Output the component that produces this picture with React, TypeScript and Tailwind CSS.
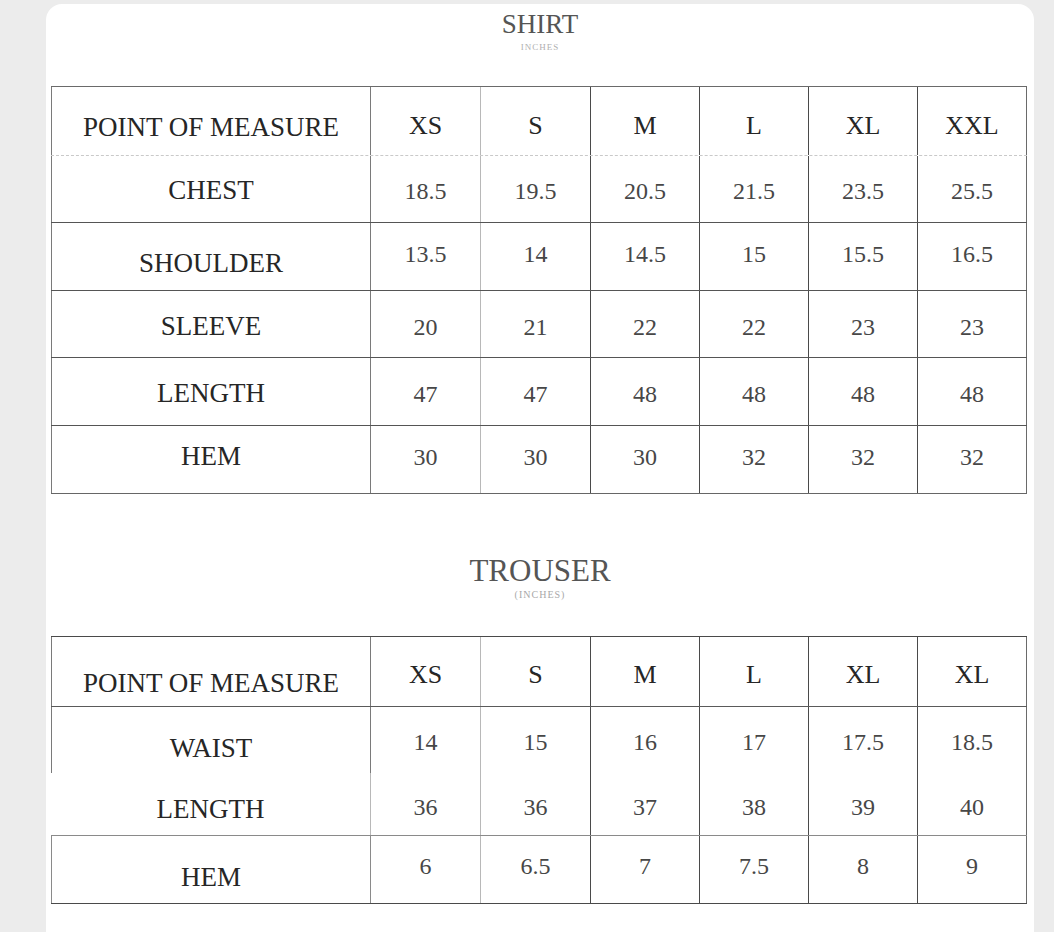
import React from "react";

type Row = {
  label: string;
  values: string[];
  h: string;
  labelCls: string;
  valCls: string;
  rowCls: string;
  labelBorder: string;
};

const COLS = "grid grid-cols-[320px_110px_110px_109px_109px_109px_109px]";

const valBorders = [
  "border-r border-[#b8b8b8]",
  "border-r border-[#4a4a4a]",
  "border-r border-[#4a4a4a]",
  "border-r border-[#4a4a4a]",
  "border-r border-[#4a4a4a]",
  "border-r border-[#6a6a6a]",
];

function Table({ rows, topCls }: { rows: Row[]; topCls: string }) {
  return (
    <div className={`ml-[5px] w-[976px] ${topCls}`}>
      {rows.map((r, i) => (
        <div key={i} className={`${COLS} ${r.h} ${r.rowCls}`}>
          <div
            className={`flex items-center justify-center ${r.labelBorder} ${r.labelCls} text-[27px] text-[#262626]`}
          >
            {r.label}
          </div>
          {r.values.map((v, j) => (
            <div
              key={j}
              className={`flex items-center justify-center ${valBorders[j]} ${r.valCls} ${
                i === 0 ? "text-[26px] text-[#262626]" : "text-[24px] text-[#474747]"
              }`}
            >
              {v}
            </div>
          ))}
        </div>
      ))}
    </div>
  );
}

const shirtRows: Row[] = [
  {
    label: "POINT OF MEASURE",
    values: ["XS", "S", "M", "L", "XL", "XXL"],
    h: "h-[69px]",
    labelCls: "pt-[12px]",
    valCls: "pt-[8px]",
    rowCls: "border-b border-dashed border-[#c9c9c9]",
    labelBorder: "border-l border-r border-[#7a7a7a]",
  },
  {
    label: "CHEST",
    values: ["18.5", "19.5", "20.5", "21.5", "23.5", "25.5"],
    h: "h-[67px]",
    labelCls: "pt-[3px]",
    valCls: "pt-[3px]",
    rowCls: "border-b border-[#555555]",
    labelBorder: "border-l border-r border-[#7a7a7a]",
  },
  {
    label: "SHOULDER",
    values: ["13.5", "14", "14.5", "15", "15.5", "16.5"],
    h: "h-[68px]",
    labelCls: "pt-[14px]",
    valCls: "pb-[6px]",
    rowCls: "border-b border-[#555555]",
    labelBorder: "border-l border-r border-[#7a7a7a]",
  },
  {
    label: "SLEEVE",
    values: ["20", "21", "22", "22", "23", "23"],
    h: "h-[67px]",
    labelCls: "pt-[5px]",
    valCls: "pt-[5px]",
    rowCls: "border-b border-[#555555]",
    labelBorder: "border-l border-r border-[#7a7a7a]",
  },
  {
    label: "LENGTH",
    values: ["47", "47", "48", "48", "48", "48"],
    h: "h-[68px]",
    labelCls: "pt-[4px]",
    valCls: "pt-[4px]",
    rowCls: "border-b border-[#555555]",
    labelBorder: "border-l border-r border-[#7a7a7a]",
  },
  {
    label: "HEM",
    values: ["30", "30", "30", "32", "32", "32"],
    h: "h-[68px]",
    labelCls: "pb-[6px]",
    valCls: "pb-[6px]",
    rowCls: "border-b border-[#666666]",
    labelBorder: "border-l border-r border-[#7a7a7a]",
  },
];

const trouserRows: Row[] = [
  {
    label: "POINT OF MEASURE",
    values: ["XS", "S", "M", "L", "XL", "XL"],
    h: "h-[70px]",
    labelCls: "pt-[24px]",
    valCls: "pt-[6px]",
    rowCls: "border-b border-[#5a5a5a]",
    labelBorder: "border-l border-r border-[#7a7a7a]",
  },
  {
    label: "WAIST",
    values: ["14", "15", "16", "17", "17.5", "18.5"],
    h: "h-[66px]",
    labelCls: "pt-[16px]",
    valCls: "pt-[4px]",
    rowCls: "",
    labelBorder: "border-l border-r border-[#7a7a7a]",
  },
  {
    label: "LENGTH",
    values: ["36", "36", "37", "38", "39", "40"],
    h: "h-[63px]",
    labelCls: "pt-[10px]",
    valCls: "pt-[6px]",
    rowCls: "border-b border-[#8a8a8a]",
    labelBorder: "border-r border-[#b8b8b8]",
  },
  {
    label: "HEM",
    values: ["6", "6.5", "7", "7.5", "8", "9"],
    h: "h-[68px]",
    labelCls: "pt-[16px]",
    valCls: "pb-[8px]",
    rowCls: "border-b border-[#4a4a4a]",
    labelBorder: "border-l border-r border-[#8a8a8a]",
  },
];

export default function App() {
  return (
    <div className="h-[932px] overflow-hidden bg-[#ececec] pt-[4px] pl-[46px] font-['Liberation_Serif','Times_New_Roman',serif]">
      <div className="w-[988px] h-[960px] bg-white rounded-[16px]">
        <div className="flex flex-col items-center pt-[4px]">
          <div className="text-[27px] leading-[32px] text-[#555555]">SHIRT</div>
          <div className="text-[9px] leading-[10px] tracking-[1px] text-[#b0b0b0] mt-[2px]">
            INCHES
          </div>
        </div>
        <Table rows={shirtRows} topCls="mt-[34px] border-t border-[#6a6a6a]" />
        <div className="flex flex-col items-center mt-[59px]">
          <div className="text-[31px] leading-[36px] text-[#555555]">TROUSER</div>
          <div className="text-[10px] leading-[12px] tracking-[1px] text-[#a8a8a8]">
            (INCHES)
          </div>
        </div>
        <Table rows={trouserRows} topCls="mt-[35px] border-t border-[#4a4a4a]" />
      </div>
    </div>
  );
}
